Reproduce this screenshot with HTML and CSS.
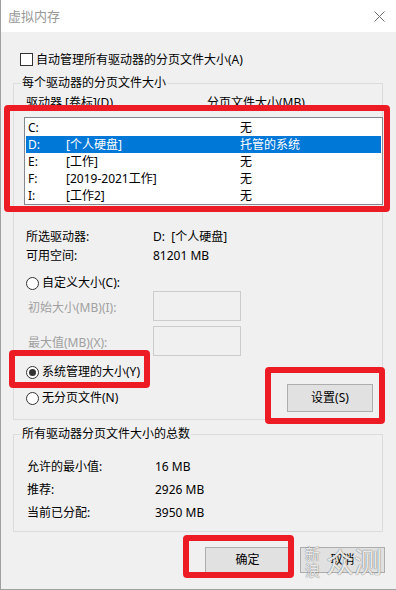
FILE: index.html
```html
<!DOCTYPE html>
<html lang="zh-CN">
<head>
<meta charset="utf-8">
<title>虚拟内存</title>
<link rel="stylesheet" href="styles.css">
</head>
<body>
<div class="window">
  <div class="titlebar">
    <span class="title">虚拟内存</span>
    <svg class="close" width="11" height="11" viewBox="0 0 11 11"><path d="M0.5 0.5L10.5 10.5M10.5 0.5L0.5 10.5" stroke="#6e6e6e" stroke-width="1" fill="none"/></svg>
  </div>
  <div class="content">
    <div class="check-row"><span class="checkbox"></span><span>自动管理所有驱动器的分页文件大小(A)</span></div>

    <div class="group g1">
      <div class="legend">每个驱动器的分页文件大小</div>
      <div class="list-head"><span class="h1">驱动器 [卷标](D)</span><span>分页文件大小(MB)</span></div>
      <div class="listbox">
        <div class="row"><span class="c1">C:</span><span class="c2"></span><span>无</span></div>
        <div class="row sel"><span class="c1">D:</span><span class="c2">[个人硬盘]</span><span>托管的系统</span></div>
        <div class="row"><span class="c1">E:</span><span class="c2">[工作]</span><span>无</span></div>
        <div class="row"><span class="c1">F:</span><span class="c2">[2019-2021工作]</span><span>无</span></div>
        <div class="row"><span class="c1">I:</span><span class="c2">[工作2]</span><span>无</span></div>
      </div>
      <div class="info">
        <div class="info-row"><span class="k">所选驱动器:</span><span class="v">D:  [个人硬盘]</span></div>
        <div class="info-row"><span class="k">可用空间:</span><span class="v">81201 MB</span></div>
      </div>
      <div class="radio-row custom"><span class="radio"></span><span>自定义大小(C):</span></div>
      <div class="field-row"><span class="flabel">初始大小(MB)(I):</span><span class="input"></span></div>
      <div class="field-row second"><span class="flabel">最大值(MB)(X):</span><span class="input"></span></div>
      <div class="radio-row sys"><span class="radio on"></span><span>系统管理的大小(Y)</span></div>
      <div class="bottom-row">
        <div class="radio-row"><span class="radio"></span><span>无分页文件(N)</span></div>
        <button class="btn set">设置(S)</button>
      </div>
    </div>

    <div class="group g2">
      <div class="legend">所有驱动器分页文件大小的总数</div>
      <div class="sum">
        <div class="sum-row"><span class="k">允许的最小值:</span><span>16 MB</span></div>
        <div class="sum-row"><span class="k">推荐:</span><span>2926 MB</span></div>
        <div class="sum-row"><span class="k">当前已分配:</span><span>3950 MB</span></div>
      </div>
    </div>

    <div class="buttons">
      <button class="btn dlg">确定</button>
      <button class="btn dlg">取消</button>
    </div>
  </div>

  <div class="mark m1"></div>
  <div class="mark m2"></div>
  <div class="mark m3"></div>
  <div class="mark m4"></div>

  <div class="watermark">
    <span class="wm-small">新<br>浪</span>
    <span class="wm-big">众测</span>
  </div>
</div>
</body>
</html>
```
FILE: styles.css
```css
* { box-sizing: border-box; }
html, body { margin: 0; padding: 0; }
body {
  font-family: "Noto Sans", "Noto Sans CJK SC", sans-serif;
  font-size: 12px;
  color: #000;
  background: #fff;
}
.window {
  position: relative;
  width: 396px;
  height: 590px;
  border-left: 1px solid #a0a0a0;
  border-bottom: 1px solid #a0a0a0;
  display: flex;
  flex-direction: column;
  overflow: hidden;
}
.titlebar {
  height: 32px;
  flex: none;
  background: #fff;
  display: flex;
  align-items: center;
  justify-content: space-between;
  padding: 0 11px 0 7px;
}
.title { font-size: 13px; line-height: 16px; color: #999; }
.close { display: block; }
.content {
  flex: 1;
  background: #f0f0f0;
  padding-top: 21px;
}
.check-row {
  display: flex;
  align-items: flex-start;
  gap: 3px;
  height: 14px;
  line-height: 14px;
  padding-left: 19px;
}
.checkbox {
  flex: none;
  width: 13px;
  height: 13px;
  border: 1px solid #333;
  background: #fff;
}
.group {
  border: 1px solid #dcdcdc;
  margin: 16px 13px 0 12px;
}
.g1 { padding-bottom: 7px; }
.g2 { margin-top: 14px; padding-bottom: 7px; }
.legend {
  width: max-content;
  margin: -9px 0 0 7px;
  padding: 0 1px;
  line-height: 16px;
  background: #f0f0f0;
}
.list-head {
  display: flex;
  margin-top: 4px;
  line-height: 16px;
  padding-left: 12px;
}
.list-head .h1 { width: 181px; }
.listbox {
  margin: 6px -1px 0 10px;
  border: 1px solid #828790;
  background: #fff;
  padding-top: 1px;
}
.row {
  display: flex;
  height: 17px;
  line-height: 17px;
  margin: 0 1px;
  padding-left: 2px;
  white-space: pre;
}
.row .c1 { width: 38px; }
.row .c2 { width: 174px; }
.row.sel { background: #0078d7; color: #fff; }

.info { margin-top: 22px; padding-left: 12px; }
.info-row { display: flex; line-height: 19px; white-space: pre; }
.info-row .k { width: 127px; }

.radio-row {
  display: flex;
  align-items: center;
  gap: 3px;
  height: 16px;
  line-height: 16px;
  padding-left: 12px;
}
.radio-row.custom { margin-top: 10px; }
.radio-row.sys { margin-top: 8px; }
.radio {
  flex: none;
  width: 13px;
  height: 13px;
  border: 1px solid #333;
  border-radius: 50%;
  background: #fff;
  display: flex;
  align-items: center;
  justify-content: center;
}
.radio.on::after {
  content: "";
  width: 7px;
  height: 7px;
  border-radius: 50%;
  background: #333;
}
.field-row {
  display: flex;
  height: 30px;
  padding-left: 14px;
}
.field-row.second { margin-top: 5px; }
.flabel {
  width: 125px;
  padding-top: 9px;
  line-height: 16px;
  color: #a0a0a0;
}
.input {
  width: 88px;
  height: 30px;
  border: 1px solid #cccccc;
  background: #f0f0f0;
}
.bottom-row {
  display: flex;
  align-items: center;
  justify-content: space-between;
  height: 28px;
  margin-top: 4px;
  padding-right: 9px;
}
.btn {
  font: inherit;
  color: #000;
  background: #e1e1e1;
  border: 1px solid #adadad;
  padding: 0;
  margin: 0;
  line-height: 16px;
}
.btn.set { width: 86px; height: 28px; }

.sum { margin-top: 13px; padding-left: 13px; }
.sum-row { display: flex; line-height: 23px; }
.sum-row .k { width: 128px; }

.buttons {
  display: flex;
  justify-content: flex-end;
  gap: 10px;
  margin-top: 15px;
  padding-right: 11px;
}
.btn.dlg { width: 85px; height: 26px; }

.mark {
  position: absolute;
  border: 6px solid #ed1c24;
  border-radius: 4px;
}
.m1 { left: 3px; top: 105px; width: 386px; height: 107px; }
.m2 { left: 8px; top: 350px; width: 141px; height: 38px; }
.m3 { left: 264px; top: 367px; width: 120px; height: 57px; }
.m4 { left: 182px; top: 535px; width: 111px; height: 43px; }

.watermark {
  position: absolute;
  left: 304px;
  top: 544px;
  display: flex;
  align-items: center;
  gap: 6px;
  color: rgba(250, 250, 250, 0.9);
  text-shadow: 0 0 1px rgba(80, 80, 80, 0.7), 0 0 1px rgba(80, 80, 80, 0.5);
  font-family: "Noto Sans CJK SC", sans-serif;
}
.wm-small { font-size: 15px; line-height: 17px; }
.wm-big { font-size: 28px; line-height: 34px; }
```
